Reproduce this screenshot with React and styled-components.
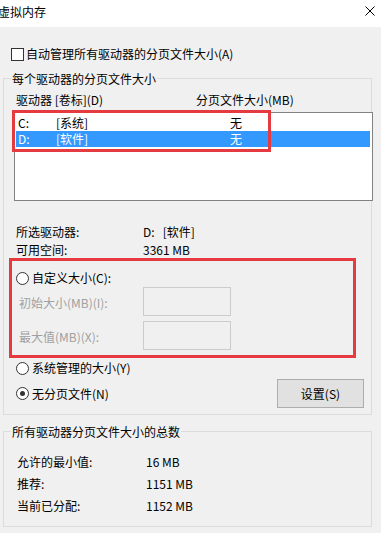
import React from 'react';
import styled, { createGlobalStyle } from 'styled-components';

const Global = createGlobalStyle`
  html, body { margin: 0; padding: 0; background: #f0f0f0; }
  body {
    font-family: "Noto Sans CJK SC", "Noto Sans", "Liberation Sans", sans-serif;
    font-size: 12px;
    line-height: 16px;
    color: #000;
  }
`;

const Window = styled.div`
  width: 381px;
  height: 533px;
  overflow: hidden;
  background: #f0f0f0;
`;

const TitleBar = styled.div`
  height: 27px;
  background: #fff;
  display: flex;
  align-items: center;
  justify-content: space-between;
`;

const Title = styled.span`
  margin-left: -2px;
  font-size: 12px;
  line-height: 16px;
  margin-top: -3px;
`;

const CloseIcon = styled.svg`
  width: 10px;
  height: 10px;
  margin-right: 6px;
  margin-top: -5px;
`;

const CheckRow = styled.div`
  display: flex;
  align-items: center;
  height: 14px;
  margin-top: 20px;
  padding-left: 11px;
  line-height: 14px;
`;

const CheckBox = styled.span`
  width: 13px;
  height: 13px;
  box-sizing: border-box;
  border: 1px solid #333;
  background: #fff;
  margin-right: 2px;
`;

const Group = styled.div`
  margin: ${p => p.$top}px 0 0 3px;
  width: 369px;
  box-sizing: border-box;
  border: 1px solid #dcdcdc;
  padding-bottom: ${p => p.$bottom}px;
`;

const Legend = styled.div`
  display: block;
  width: fit-content;
  margin: -8px 0 0 7px;
  padding: 0 1px;
  height: 16px;
  line-height: 16px;
  background: #f0f0f0;
`;

const Headers = styled.div`
  display: grid;
  grid-template-columns: 180px auto;
  margin-top: 5px;
  padding-left: 12px;
  line-height: 16px;
`;

const ListBox = styled.div`
  position: relative;
  margin: 4px 0 0 10px;
  width: 359px;
  height: 89px;
  box-sizing: border-box;
  border: 1px solid #828282;
  background: #fff;
  padding: 2px 2px 0 1px;
`;

const ListRow = styled.div`
  display: grid;
  grid-template-columns: 38px 174px auto;
  height: 16px;
  line-height: 16px;
  padding-left: 2px;
  background: ${p => (p.$selected ? '#3399ff' : 'transparent')};
  color: ${p => (p.$selected ? '#fff' : '#000')};
`;

const Mark = styled.div`
  position: absolute;
  left: ${p => p.$left}px;
  top: ${p => p.$top}px;
  width: ${p => p.$w}px;
  height: ${p => p.$h}px;
  box-sizing: border-box;
  border: 3px solid #e53a40;
  pointer-events: none;
`;

const InfoList = styled.div`
  margin-top: ${p => p.$top}px;
  padding-left: ${p => p.$left}px;
`;

const InfoRow = styled.div`
  display: grid;
  grid-template-columns: ${p => p.$label}px auto;
  height: ${p => p.$h}px;
  line-height: ${p => p.$h}px;
`;

const CustomBox = styled.div`
  margin: -1px 0 0 5px;
  width: 347px;
  box-sizing: border-box;
  border: 3px solid #e53a40;
  padding: 9px 0 5px 0;
`;

const RadioRow = styled.div`
  display: flex;
  align-items: center;
  height: ${p => p.$h || 16}px;
  margin-top: ${p => p.$top || 0}px;
  padding-left: ${p => p.$left}px;
  line-height: 16px;
`;

const Radio = styled.span`
  position: relative;
  width: 13px;
  height: 13px;
  box-sizing: border-box;
  border: 1px solid #333;
  border-radius: 50%;
  background: #fff;
  margin-right: 3px;
  flex: none;

  &::after {
    content: '';
    display: ${p => (p.$checked ? 'block' : 'none')};
    position: absolute;
    left: 3px;
    top: 3px;
    width: 5px;
    height: 5px;
    border-radius: 50%;
    background: #333;
  }
`;

const InputRow = styled.div`
  display: grid;
  grid-template-columns: 124px 88px;
  align-items: center;
  padding-left: 7px;
  margin-top: ${p => p.$top}px;
  color: #a0a0a0;
  line-height: 16px;
`;

const FieldLabel = styled.span`
  padding-top: 2px;
`;

const Field = styled.div`
  height: 29px;
  box-sizing: border-box;
  border: 1px solid #cccccc;
  background: #f0f0f0;
`;

const Button = styled.div`
  margin-left: auto;
  margin-right: 7px;
  width: 87px;
  height: 29px;
  box-sizing: border-box;
  border: 1px solid #adadad;
  background: #e1e1e1;
  display: flex;
  align-items: center;
  justify-content: center;
`;

export default function App() {
  return (
    <Window>
      <Global />
      <TitleBar>
        <Title>虚拟内存</Title>
        <CloseIcon viewBox="0 0 10 10">
          <path d="M0.5 0.5 L9.5 9.5 M9.5 0.5 L0.5 9.5" stroke="#000" strokeWidth="1" fill="none" />
        </CloseIcon>
      </TitleBar>

      <CheckRow>
        <CheckBox />
        自动管理所有驱动器的分页文件大小(A)
      </CheckRow>

      <Group $top={17} $bottom={6}>
        <Legend>每个驱动器的分页文件大小</Legend>
        <Headers>
          <span>驱动器 [卷标](D)</span>
          <span>分页文件大小(MB)</span>
        </Headers>
        <ListBox>
          <ListRow>
            <span>C:</span>
            <span>[系统]</span>
            <span>无</span>
          </ListRow>
          <ListRow $selected>
            <span>D:</span>
            <span>[软件]</span>
            <span>无</span>
          </ListRow>
          <Mark $left={-3} $top={-3} $w={259} $h={42} />
        </ListBox>

        <InfoList $top={22} $left={12}>
          <InfoRow $label={127} $h={18}>
            <span>所选驱动器:</span>
            <span>D:&nbsp;&nbsp;&nbsp;[软件]</span>
          </InfoRow>
          <InfoRow $label={127} $h={18}>
            <span>可用空间:</span>
            <span>3361 MB</span>
          </InfoRow>
        </InfoList>

        <CustomBox>
          <RadioRow $left={4}>
            <Radio />
            自定义大小(C):
          </RadioRow>
          <InputRow $top={1}>
            <FieldLabel>初始大小(MB)(I):</FieldLabel>
            <Field />
          </InputRow>
          <InputRow $top={5}>
            <FieldLabel>最大值(MB)(X):</FieldLabel>
            <Field />
          </InputRow>
        </CustomBox>

        <RadioRow $left={12} $top={2}>
          <Radio />
          系统管理的大小(Y)
        </RadioRow>
        <RadioRow $left={12} $top={3} $h={29}>
          <Radio $checked />
          无分页文件(N)
          <Button>设置(S)</Button>
        </RadioRow>
      </Group>

      <Group $top={16} $bottom={9}>
        <Legend>所有驱动器分页文件大小的总数</Legend>
        <InfoList $top={11} $left={13}>
          <InfoRow $label={129} $h={22}>
            <span>允许的最小值:</span>
            <span>16 MB</span>
          </InfoRow>
          <InfoRow $label={129} $h={22}>
            <span>推荐:</span>
            <span>1151 MB</span>
          </InfoRow>
          <InfoRow $label={129} $h={22}>
            <span>当前已分配:</span>
            <span>1152 MB</span>
          </InfoRow>
        </InfoList>
      </Group>
    </Window>
  );
}
